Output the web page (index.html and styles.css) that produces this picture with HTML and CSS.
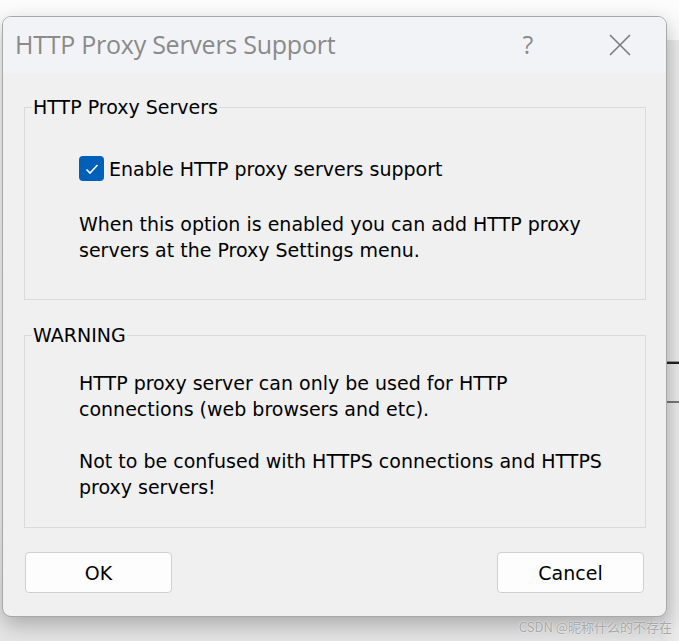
FILE: index.html
```html
<!DOCTYPE html>
<html>
	<head>
		<meta charset="utf-8">
		<title>HTTP Proxy Servers Support</title>
		<link rel="stylesheet" href="styles.css">
	</head>
	<body>
		<div class="desk-strip">
			<div class="strip-line1"></div>
			<div class="strip-line2"></div>
		</div>
		<div class="win">
			<div class="titlebar">
				<span class="title">HTTP Proxy Servers Support</span>
				<span class="tb-help">?</span>
				<span class="tb-close">
					<svg width="22" height="22" viewBox="0 0 22 22"><path d="M1 1L21 21M21 1L1 21" stroke="#7a7a7a" stroke-width="1.6" fill="none"/></svg>
				</span>
			</div>
			<div class="content">
				<fieldset class="group g1">
					<legend>HTTP Proxy Servers</legend>
					<div class="inner">
						<label class="check">
							<span class="box">
								<svg width="14" height="12" viewBox="0 0 14 12"><path d="M1.5 6.5L5 10L12.5 2" stroke="#fff" stroke-width="1.6" fill="none"/></svg>
							</span>
							Enable HTTP proxy servers support
						</label>
						<p>When this option is enabled you can add HTTP proxy<br>servers at the Proxy Settings menu.</p>
					</div>
				</fieldset>
				<fieldset class="group g2">
					<legend>WARNING</legend>
					<div class="inner">
						<p>HTTP proxy server can only be used for HTTP<br>connections (web browsers and etc).</p>
						<p>Not to be confused with HTTPS connections and HTTPS<br>proxy servers!</p>
					</div>
				</fieldset>
				<div class="buttons">
					<button class="btn">OK</button>
					<button class="btn">Cancel</button>
				</div>
			</div>
		</div>
		<div class="mark">CSDN @昵称什么的不存在</div>
	</body>
</html>
```
FILE: styles.css
```css
*{margin: 0; padding: 0; box-sizing: border-box;}
html,body{width: 679px; height: 641px; overflow: hidden;}
body{background: linear-gradient(#fcfcfc, #f6f6f6 80%, #e6e6e6); font-family: "DejaVu Sans", sans-serif; position: relative;}

.desk-strip{position: absolute; left: 660px; top: 40px; width: 19px; height: 601px; background: linear-gradient(90deg, #e2e2e2, #ececec);}
.strip-line1{position: absolute; left: 0; right: 0; top: 321px; height: 3px; border-top: 1px solid #999; border-bottom: 2px solid #222;}
.strip-line2{position: absolute; left: 0; right: 0; top: 361px; height: 2px; background: #777;}

.win{position: relative; margin: 16px 0 0 2px; width: 665px; height: 601px; background: #f0f0f0; border: 1px solid #a8a8a8; border-radius: 9px; box-shadow: 0 8px 22px rgba(0,0,0,.28); overflow: hidden;}

.titlebar{height: 56px; background: #f2f3f7; display: flex; align-items: center; padding-left: 12px;}
.title{flex: 1; font-family: "Open Sans", sans-serif; font-size: 25px; color: #8a8a8a; letter-spacing: -0.25px; padding-bottom: 2px;}
.tb-help{width: 40px; font-family: "Open Sans", sans-serif; font-size: 25px; color: #8a8a8a; text-align: center; margin-right: 61px; padding-bottom: 2px;}
.tb-close{width: 22px; height: 22px; margin-right: 35px; display: flex;}

.content{padding: 23px 20px 0 21px;}
.group{border: 1px solid #dadada; padding: 0 0 0 7px; font-size: 19px; color: #000;}
.group legend{padding: 0 1px; line-height: 22px;}
.inner{padding-left: 47px;}
.g1{height: 204px; padding-top: 38px;}
.g2{height: 204px; margin-top: 24px; padding-top: 25px;}

.check{display: flex; align-items: center; height: 25px;}
.box{width: 25px; height: 25px; background: #005fb8; border-radius: 4px; display: flex; align-items: center; justify-content: center; margin-right: 5px;}
.group p{line-height: 25.5px; margin-top: 31px;}
.g2 p{margin-top: 27px;}
.g2 p:first-of-type{margin-top: 0;}

.buttons{display: flex; justify-content: space-between; margin-top: 24px; padding: 0 2px 0 1px;}
.btn{width: 147px; height: 41px; background: #fdfdfd; border: 1px solid #d0d0d0; border-radius: 4px; font-family: "DejaVu Sans", sans-serif; font-size: 19px; color: #000;}

.mark{position: absolute; right: 7px; top: 617px; font-family: "Noto Sans CJK SC", sans-serif; font-size: 13px; color: #a8a8a8; text-shadow: 0 0 2px #fff;}
```
